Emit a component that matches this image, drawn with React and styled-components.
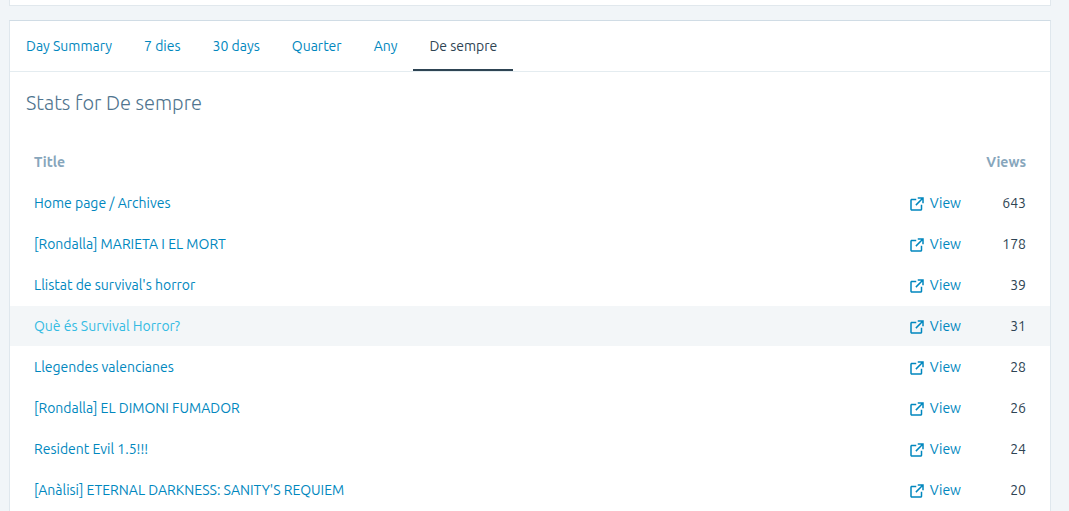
import React, { useState } from 'react';
import styled, { createGlobalStyle } from 'styled-components';

const periods = ['Day Summary', '7 dies', '30 days', 'Quarter', 'Any', 'De sempre'];

const posts = [
    { title: 'Home page / Archives', views: 643 },
    { title: '[Rondalla] MARIETA I EL MORT', views: 178 },
    { title: "Llistat de survival's horror", views: 39 },
    { title: 'Què és Survival Horror?', views: 31, highlighted: true },
    { title: 'Llegendes valencianes', views: 28 },
    { title: '[Rondalla] EL DIMONI FUMADOR', views: 26 },
    { title: 'Resident Evil 1.5!!!', views: 24 },
    { title: "[Anàlisi] ETERNAL DARKNESS: SANITY'S REQUIEM", views: 20 },
];

function ExternalIcon() {
    return (
        <Icon viewBox="0 0 24 24" aria-hidden="true">
            <path d="M19 13v6c0 1.105-.895 2-2 2H5c-1.105 0-2-.895-2-2V7c0-1.105.895-2 2-2h6v2H5v12h12v-6h2zM13 3v2h4.586l-7.793 7.793 1.414 1.414L19 6.414V11h2V3h-8z" />
        </Icon>
    );
}

export default function App() {
    const [period, setPeriod] = useState('De sempre');

    return (
        <>
            <GlobalStyle />
            <Page>
                <PreviousCard />
                <Card>
                    <Tabs>
                        {periods.map((name) => (
                            <Tab
                                key={name}
                                type="button"
                                $active={name === period}
                                aria-pressed={name === period}
                                onClick={() => setPeriod(name)}
                            >
                                {name}
                            </Tab>
                        ))}
                    </Tabs>
                    <Heading>Stats for {period}</Heading>
                    <Table>
                        <thead>
                            <tr>
                                <HeadCell scope="col">Title</HeadCell>
                                <Cell />
                                <HeadCell scope="col" $right>Views</HeadCell>
                            </tr>
                        </thead>
                        <tbody>
                            {posts.map((post) => (
                                <Row key={post.title} $highlighted={post.highlighted}>
                                    <Cell>
                                        <TitleLink href="#" $highlighted={post.highlighted}>{post.title}</TitleLink>
                                    </Cell>
                                    <Cell $right>
                                        <ViewLink href="#">
                                            <ExternalIcon />
                                            View
                                        </ViewLink>
                                    </Cell>
                                    <Cell $right>{post.views}</Cell>
                                </Row>
                            ))}
                        </tbody>
                    </Table>
                </Card>
            </Page>
        </>
    );
}

const GlobalStyle = createGlobalStyle`
    * {
        box-sizing: border-box;
    }

    html {
        overflow: hidden;
    }

    body {
        margin: 0;
        background: #f1f5f8;
        color: #2e4453;
        font-family: "Ubuntu", "Noto Sans", sans-serif;
        font-size: 14px;
        line-height: 20px;
    }
`;

const Page = styled.main`
    padding: 0 18px 0 9px;
`;

const PreviousCard = styled.div`
    height: 6px;
    margin-bottom: 14px;
    background: #fff;
    border: 1px solid #e1e8ed;
    border-top: 0;
`;

const Card = styled.section`
    background: #fff;
    border: 1px solid #dfe7ed;
    border-top-color: #d0dce5;
`;

const Tabs = styled.nav`
    display: flex;
    border-bottom: 1px solid #e4ecf0;
`;

const Tab = styled.button`
    padding: 15px 16px 13px;
    border: 0;
    border-bottom: 2px solid ${(props) => (props.$active ? '#2e4453' : 'transparent')};
    background: none;
    color: ${(props) => (props.$active ? '#2e4453' : '#0087be')};
    font: inherit;
    cursor: pointer;
`;

const Heading = styled.h2`
    margin: 16px 16px 24px;
    color: #4f748e;
    font-size: 20px;
    font-weight: 300;
    line-height: 30px;
`;

const Table = styled.table`
    width: 100%;
    border-spacing: 0;
`;

const Row = styled.tr`
    background: ${(props) => (props.$highlighted ? '#f3f6f8' : 'transparent')};
`;

const Cell = styled.td`
    padding: 10px 24px;
    border-bottom: 1px solid #fff;
    text-align: ${(props) => (props.$right ? 'right' : 'left')};

    &:nth-child(2) {
        padding: 10px 0;
    }

    &:last-child {
        width: 89px;
    }
`;

const HeadCell = styled(Cell).attrs({ as: 'th' })`
    color: #87a6bc;
    font-weight: 700;
`;

const TitleLink = styled.a`
    color: ${(props) => (props.$highlighted ? '#33bbe3' : '#0087be')};
    text-decoration: none;
`;

const ViewLink = styled.a`
    display: inline-flex;
    align-items: flex-end;
    gap: 4px;
    color: #0087be;
    text-decoration: none;
    vertical-align: top;
`;

const Icon = styled.svg`
    width: 18px;
    height: 18px;
    fill: currentColor;
`;
